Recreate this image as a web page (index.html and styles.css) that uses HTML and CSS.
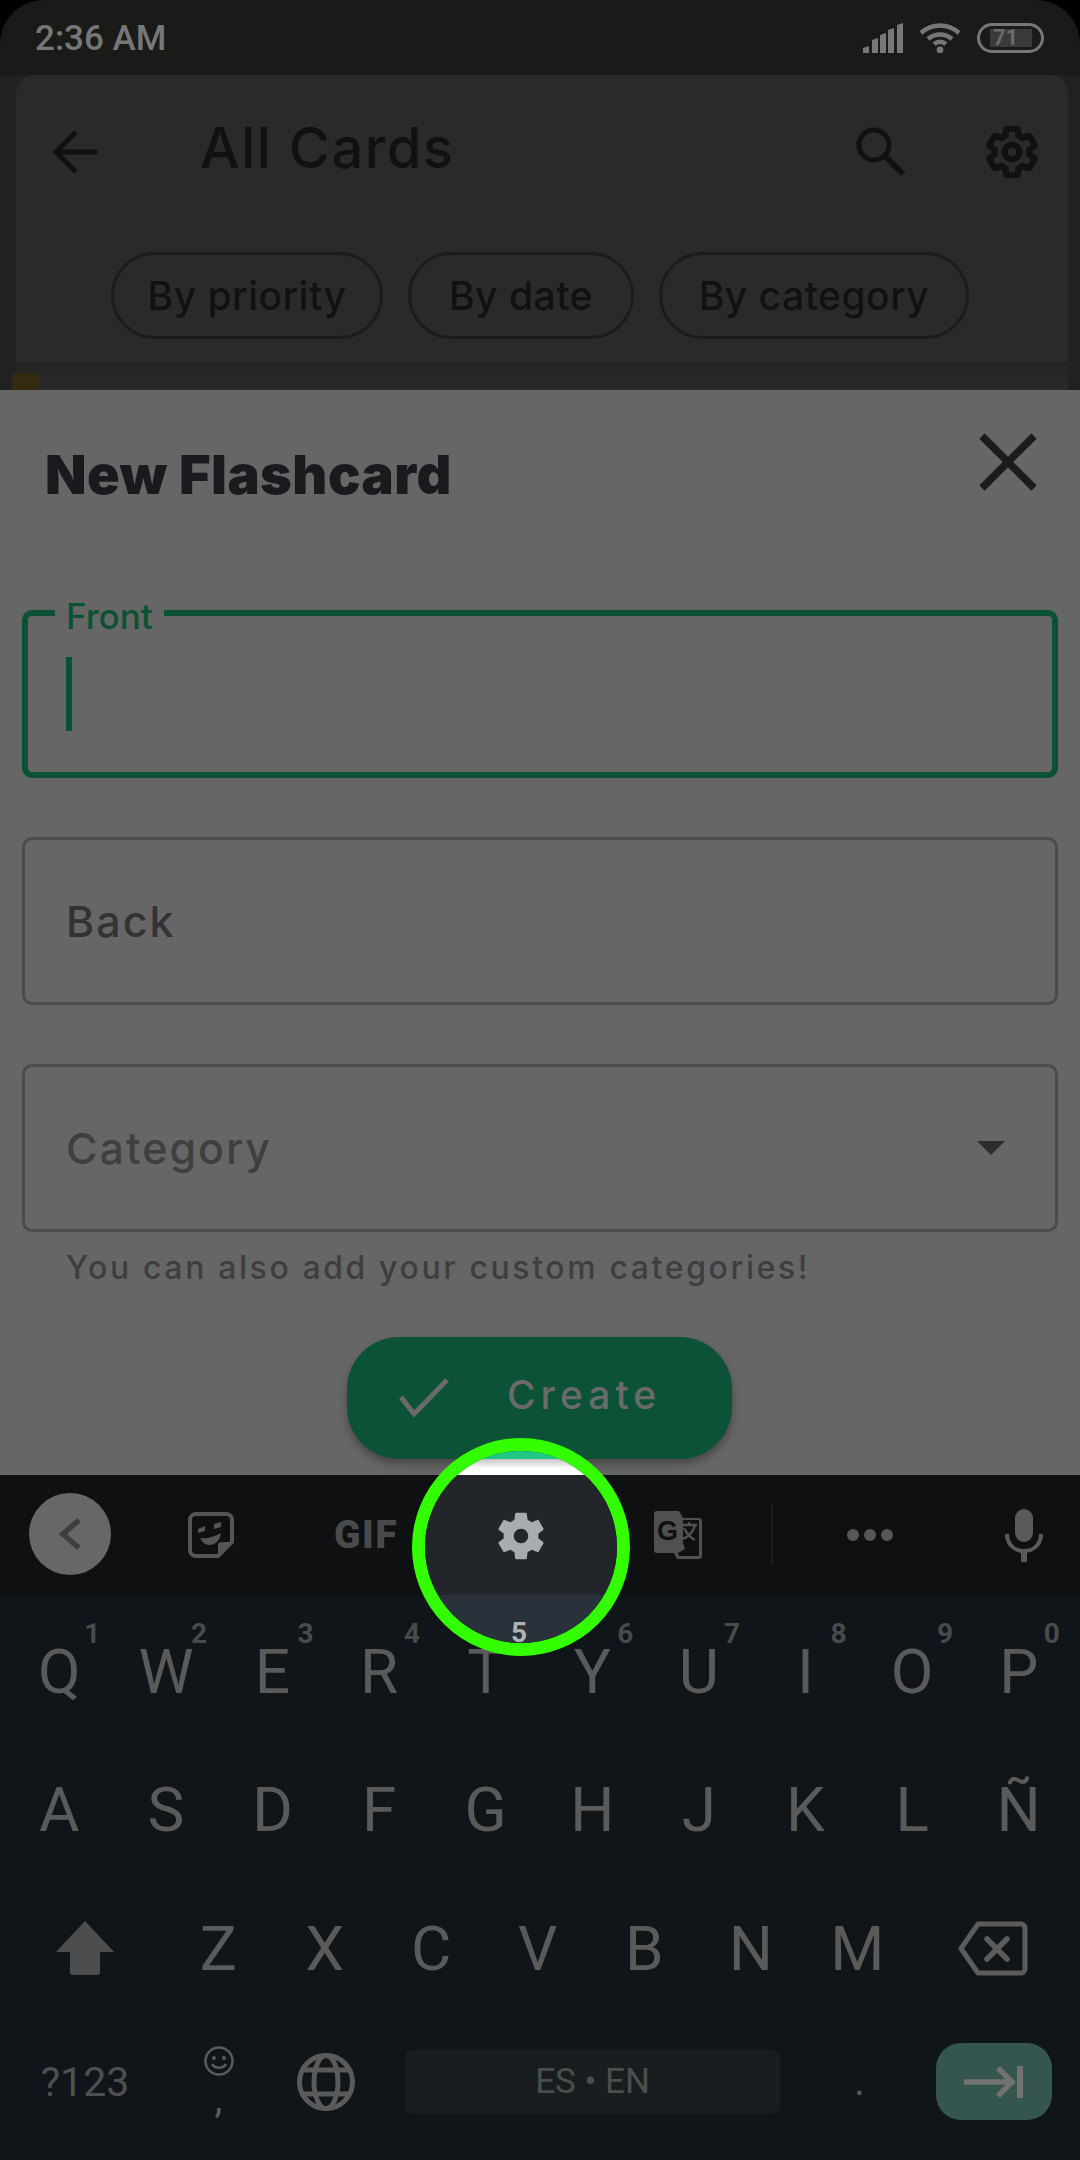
FILE: index.html
```html
<!DOCTYPE html>
<html lang="en">
<head>
    <meta charset="UTF-8">
    <meta name="viewport" content="width=device-width, initial-scale=1.0">
    <title>New Flashcard</title>
    <link rel="stylesheet" href="styles.css">
</head>
<body>
<div class="screen">
    <div class="status-bar">
        <span class="time">2:36 AM</span>
        <div class="status-icons">
            <svg class="signal" width="40" height="30" viewBox="0 0 40 30"><path d="M0 30v-5l6-2v7zM9 30V17l6-2v15zM17 30V12l6-2v20zM25 30V7l6-2v25zM34 30V2l6-2v30z" fill="#777"/></svg>
            <svg class="wifi" width="42" height="30" viewBox="0 0 42 30"><path d="M2 10c11-10 27-10 38 0M9 16c7-6 17-6 24 0M15 21c4-3 8-3 12 0" fill="none" stroke="#777" stroke-width="4.5"/><circle cx="21" cy="27" r="3.4" fill="#777"/></svg>
            <div class="battery"><span class="battery-level">71</span></div>
        </div>
    </div>

    <div class="page">
        <div class="page-card">
            <div class="app-bar">
                <svg width="44" height="44" viewBox="0 0 44 44"><path d="M44 22H4M23 2 3 22l20 20" fill="none" stroke="#111" stroke-width="5"/></svg>
                <h1 class="app-title">All Cards</h1>
                <svg class="search-icon" width="50" height="50" viewBox="0 0 50 50"><circle cx="18" cy="18" r="15" fill="none" stroke="#111" stroke-width="5"/><path d="M29 29l18 18" stroke="#111" stroke-width="6"/></svg>
                <svg class="cog-icon" width="58" height="58" viewBox="0 0 24 24"><path d="M19.14 12.94c.04-.3.06-.61.06-.94 0-.32-.02-.64-.07-.94l2.03-1.58c.18-.14.23-.41.12-.61l-1.92-3.32c-.12-.22-.37-.29-.59-.22l-2.39.96c-.5-.38-1.03-.7-1.62-.94l-.36-2.54c-.04-.24-.24-.41-.48-.41h-3.84c-.24 0-.43.17-.47.41l-.36 2.54c-.59.24-1.13.57-1.62.94l-2.39-.96c-.22-.08-.47 0-.59.22L2.74 8.87c-.12.21-.08.47.12.61l2.03 1.58c-.05.3-.09.63-.09.94s.02.64.07.94l-2.03 1.58c-.18.14-.23.41-.12.61l1.92 3.32c.12.22.37.29.59.22l2.39-.96c.5.38 1.03.7 1.62.94l.36 2.54c.05.24.24.41.48.41h3.84c.24 0 .44-.17.47-.41l.36-2.54c.59-.24 1.13-.56 1.62-.94l2.39.96c.22.08.47 0 .59-.22l1.92-3.32c.12-.22.07-.47-.12-.61l-2.01-1.58z" fill="none" stroke="#111" stroke-width="2.6"/><circle cx="12" cy="12" r="3" fill="none" stroke="#111" stroke-width="2.6"/></svg>
            </div>
            <div class="chips">
                <span class="chip">By priority</span>
                <span class="chip">By date</span>
                <span class="chip">By category</span>
            </div>
            <div class="peek"><span class="peek-mark"></span></div>
        </div>
    </div>

    <div class="sheet">
        <div class="sheet-head">
            <h2 class="sheet-title">New Flashcard</h2>
            <svg width="58" height="58" viewBox="0 0 58 58"><path d="M3 3l52 52M55 3 3 55" stroke="#1c1c20" stroke-width="7.5"/></svg>
        </div>
        <div class="fields">
            <div class="field field-active">
                <span class="field-label">Front</span>
                <span class="cursor"></span>
            </div>
            <div class="field"><span class="field-text">Back</span></div>
            <div class="field field-select">
                <span class="field-text field-muted">Category</span>
                <span class="select-arrow"></span>
            </div>
        </div>
        <p class="help">You can also add your custom categories!</p>
        <div class="button-row">
            <div class="create-button">
                <svg width="50" height="40" viewBox="0 0 50 40"><path d="M2 19l13 17L48 2" fill="none" stroke="#6a6a6a" stroke-width="5"/></svg>
                <span class="create-label">Create</span>
            </div>
        </div>
    </div>

    <div class="keyboard">
        <div class="toolbar">
            <div class="tool"><span class="back-circle"><svg width="26" height="34" viewBox="0 0 26 34"><path d="M22 3 6 17l16 14" fill="none" stroke="#3f3f3f" stroke-width="5.5"/></svg></span></div>
            <div class="tool">
                <svg width="46" height="46" viewBox="0 0 46 46"><path d="M8 2h30a6 6 0 0 1 6 6v22L30 44H8a6 6 0 0 1-6-6V8a6 6 0 0 1 6-6z" fill="none" stroke="#555" stroke-width="4"/><path d="M44 30 30 44V34a4 4 0 0 1 4-4z" fill="#555"/><path d="M10 17l7-3v5l-7 2zM26 12l7-2v5l-7 2z" fill="#555"/><path d="M12 26c7 1 14-1 21-5-1 8-6 12-12 12-4 0-7-3-9-7z" fill="#555"/></svg>
            </div>
            <div class="tool"><span class="gif">GIF</span></div>
            <div class="tool"></div>
            <div class="tool">
                <svg width="48" height="48" viewBox="0 0 48 48"><path d="M3 0h22l4 7h16a3 3 0 0 1 3 3v35a3 3 0 0 1-3 3H23l-3-6H3a3 3 0 0 1-3-3V3a3 3 0 0 1 3-3z" fill="#505050"/><path d="M29 9h16v36H25l-1-3 7-4-2-6z" fill="#0e1012"/><text x="3" y="29" class="translate-g">G</text><path d="M27 14h16M35 11v3M41 14c-2 8-8 13-13 14M30 17c3 6 7 10 11 12" fill="none" stroke="#505050" stroke-width="2.5"/></svg>
            </div>
            <div class="tool"><span class="divider"></span></div>
            <div class="tool dots"><i></i><i></i><i></i></div>
            <div class="tool tool-end">
                <svg width="38" height="53" viewBox="0 0 38 53"><rect x="10" y="0" width="18" height="33" rx="9" fill="#5a5a5a"/><path d="M2 25c0 11 8 17 17 17s17-6 17-17" fill="none" stroke="#5a5a5a" stroke-width="4"/><path d="M19 42v11" stroke="#5a5a5a" stroke-width="6"/></svg>
            </div>
        </div>

        <div class="keys">
            <div class="key-row">
                <span class="key">Q<sup>1</sup></span><span class="key">W<sup>2</sup></span><span class="key">E<sup>3</sup></span><span class="key">R<sup>4</sup></span><span class="key">T</span><span class="key">Y<sup>6</sup></span><span class="key">U<sup>7</sup></span><span class="key">I<sup>8</sup></span><span class="key">O<sup>9</sup></span><span class="key">P<sup>0</sup></span>
            </div>
            <div class="key-row">
                <span class="key">A</span><span class="key">S</span><span class="key">D</span><span class="key">F</span><span class="key">G</span><span class="key">H</span><span class="key">J</span><span class="key">K</span><span class="key">L</span><span class="key">Ñ</span>
            </div>
            <div class="key-row key-row-wide">
                <span class="key">
                    <svg width="58" height="54" viewBox="0 0 58 54"><path d="M29 0l29 31H44v20a3 3 0 0 1-3 3H17a3 3 0 0 1-3-3V31H0z" fill="#4d4d4d"/></svg>
                </span>
                <span class="key">Z</span><span class="key">X</span><span class="key">C</span><span class="key">V</span><span class="key">B</span><span class="key">N</span><span class="key">M</span>
                <span class="key">
                    <svg width="70" height="55" viewBox="0 0 70 55"><path d="M20 3h43a4 4 0 0 1 4 4v41a4 4 0 0 1-4 4H20L3 27.500z" fill="none" stroke="#5c5c5c" stroke-width="5" stroke-linejoin="round"/><path d="M29 18l20 20M49 18 29 38" stroke="#5c5c5c" stroke-width="5.500" stroke-linecap="round"/></svg>
                </span>
            </div>
            <div class="key-row key-row-wide key-row-bottom">
                <span class="key key-small">?123</span>
                <span class="key key-comma">
                    <svg width="30" height="30" viewBox="0 0 30 30"><circle cx="15" cy="15" r="13.500" fill="none" stroke="#5a5a5a" stroke-width="2.500"/><circle cx="10" cy="12" r="2" fill="#5a5a5a"/><circle cx="20" cy="12" r="2" fill="#5a5a5a"/><path d="M8 18c3 5 11 5 14 0" fill="none" stroke="#5a5a5a" stroke-width="2.500"/></svg>
                    <span class="comma">,</span>
                </span>
                <span class="key">
                    <svg width="58" height="60" viewBox="0 0 58 60"><circle cx="29" cy="30" r="26.500" fill="none" stroke="#5a5a5a" stroke-width="5"/><ellipse cx="29" cy="30" rx="12" ry="26.500" fill="none" stroke="#5a5a5a" stroke-width="5"/><path d="M5 18h48M5 42h48" stroke="#5a5a5a" stroke-width="5"/></svg>
                </span>
                <span class="key key-space"><span class="space-bar">ES • EN</span></span>
                <span class="key key-period">.</span>
                <span class="key">
                    <span class="enter">
                        <svg width="60" height="34" viewBox="0 0 60 34"><path d="M0 17h50M34 3l14 14-14 14" fill="none" stroke="#727272" stroke-width="5.500"/><path d="M56 1v32" stroke="#727272" stroke-width="6"/></svg>
                    </span>
                </span>
            </div>
        </div>
    </div>

    <!-- tap highlight, sits over the sheet and keyboard -->
    <div class="tap-ring">
        <div class="ring-button"></div>
        <div class="ring-sheet"></div>
        <div class="ring-toolbar">
            <svg width="58" height="58" viewBox="0 0 24 24"><path d="M19.14 12.94c.04-.3.06-.61.06-.94 0-.32-.02-.64-.07-.94l2.03-1.58c.18-.14.23-.41.12-.61l-1.92-3.32c-.12-.22-.37-.29-.59-.22l-2.39.96c-.5-.38-1.03-.7-1.62-.94l-.36-2.54c-.04-.24-.24-.41-.48-.41h-3.84c-.24 0-.43.17-.47.41l-.36 2.54c-.59.24-1.13.57-1.62.94l-2.39-.96c-.22-.08-.47 0-.59.22L2.74 8.87c-.12.21-.08.47.12.61l2.03 1.58c-.05.3-.09.63-.09.94s.02.64.07.94l-2.03 1.58c-.18.14-.23.41-.12.61l1.92 3.32c.12.22.37.29.59.22l2.39-.96c.5.38 1.03.7 1.62.94l.36 2.54c.05.24.24.41.48.41h3.84c.24 0 .44-.17.47-.41l.36-2.54c.59-.24 1.13-.56 1.62-.94l2.39.96c.22.08.47 0 .59-.22l1.92-3.32c.12-.22.07-.47-.12-.61l-2.01-1.58zM12 15c-1.650 0-3-1.350-3-3s1.350-3 3-3 3 1.350 3 3-1.350 3-3 3z" fill="#a9acae"/></svg>
        </div>
        <div class="ring-keys"><span class="ring-digit">5</span></div>
    </div>
</div>
</body>
</html>
```

FILE: styles.css
```css
* {
    box-sizing: border-box;
}
html, body {
    margin: 0;
    padding: 0;
    background: #000;
}
.screen {
    position: relative;
    width: 1080px;
    height: 2160px;
    overflow: hidden;
    display: flex;
    flex-direction: column;
    font-family: Inter, "Liberation Sans", sans-serif;
    background: #000;
}
svg {
    display: block;
    flex-shrink: 0;
}

/* status bar */
.status-bar {
    height: 75px;
    flex-shrink: 0;
    display: flex;
    align-items: center;
    justify-content: space-between;
    padding: 0 36px 0 35px;
    background: #1a1a18;
    border-radius: 44px 44px 0 0;
}
.time {
    padding-top: 2px;
    font-family: Roboto, sans-serif;
    font-weight: 500;
    font-size: 35px;
    color: #777;
}
.status-icons {
    display: flex;
    align-items: center;
    gap: 16px;
}
.battery {
    width: 67px;
    height: 30px;
    padding: 3px 10px;
    border: 3px solid #777;
    border-radius: 15px;
}
.battery-level {
    display: block;
    width: 42px;
    height: 100%;
    padding-left: 3px;
    background: #3a3a3a;
    color: #6a6a6a;
    font-family: Roboto, sans-serif;
    font-weight: 700;
    font-size: 22px;
    line-height: 18px;
}

/* list page behind the sheet */
.page {
    height: 315px;
    flex-shrink: 0;
    padding: 0 12px 0 16px;
    background: #212121;
}
.page-card {
    height: 315px;
    display: flex;
    flex-direction: column;
    background: #2a2a2a;
    border-radius: 18px 18px 0 0;
}
.app-bar {
    height: 154px;
    flex-shrink: 0;
    display: flex;
    align-items: center;
    padding-left: 37px;
}
.app-title {
    margin: -9px 0 0 103px;
    flex: 1;
    font-weight: 500;
    font-size: 56px;
    letter-spacing: 1.500px;
    color: #111;
}
.search-icon {
    margin-right: 77px;
}
.cog-icon {
    margin-right: 27px;
}
.chips {
    display: grid;
    grid-template-columns: 272px 226px 310px;
    gap: 25px;
    margin-top: 23px;
    padding-left: 95px;
}
.chip {
    height: 87px;
    display: flex;
    align-items: center;
    justify-content: center;
    border: 3px solid #1c1c1c;
    border-radius: 44px;
    font-weight: 500;
    font-size: 39px;
    letter-spacing: 0.500px;
    color: #111;
    white-space: nowrap;
}
.peek {
    height: 28px;
    margin-top: 23px;
    padding-top: 11px;
    background: linear-gradient(#232323, #2a2a2a);
}
.peek-mark {
    display: block;
    width: 27px;
    height: 17px;
    margin-left: -4px;
    background: #332a10;
    border-radius: 4px 4px 0 0;
}

/* new flashcard sheet */
.sheet {
    height: 1085px;
    flex-shrink: 0;
    background: #666;
}
.sheet-head {
    height: 220px;
    display: flex;
    justify-content: space-between;
    padding: 43px 43px 0 45px;
}
.sheet-title {
    margin: 12px 0 0;
    font-weight: 900;
    font-size: 54px;
    letter-spacing: 0.500px;
    line-height: 60px;
    color: #1a1a1e;
}
.fields {
    display: flex;
    flex-direction: column;
    gap: 59px;
    padding: 0 22px;
}
.field {
    position: relative;
    height: 168px;
    display: flex;
    align-items: center;
    padding: 0 41px;
    border: 3px solid #4b4b4b;
    border-radius: 10px;
}
.field-active {
    border: 6px solid #0b5234;
    padding: 0 38px;
}
.field-label {
    position: absolute;
    top: -20px;
    left: 27px;
    padding: 0 11px;
    background: #666;
    font-weight: 500;
    font-size: 35px;
    line-height: 40px;
    color: #0b5234;
}
.cursor {
    width: 6px;
    height: 74px;
    background: #0b5234;
}
.field-text {
    font-weight: 500;
    font-size: 43px;
    letter-spacing: 2px;
    color: #333;
}
.field-muted {
    color: #3f3f3f;
}
.field-select {
    justify-content: space-between;
    padding-right: 50px;
}
.select-arrow {
    width: 0;
    height: 0;
    border-left: 14px solid transparent;
    border-right: 14px solid transparent;
    border-top: 14px solid #2e2e2e;
}
.help {
    margin: 16px 0 0 66px;
    font-weight: 500;
    font-size: 32px;
    line-height: 40px;
    letter-spacing: 2.600px;
    color: #3e3e3e;
}
.button-row {
    display: flex;
    padding-left: 347px;
    margin-top: 49px;
}
.create-button {
    width: 385px;
    height: 122px;
    display: flex;
    align-items: center;
    gap: 58px;
    padding-left: 52px;
    background: #0c5236;
    border-radius: 52px;
    box-shadow: 0 5px 8px rgba(0, 0, 0, 0.3);
    font-weight: 500;
    font-size: 39px;
    letter-spacing: 5px;
    color: #6a6a6a;
}
.create-label {
    padding-bottom: 8px;
}

/* keyboard */
.keyboard {
    flex: 1;
    display: flex;
    flex-direction: column;
    background: #0f1518;
}
.toolbar {
    height: 120px;
    flex-shrink: 0;
    display: grid;
    grid-template-columns: 133px 156px 154px 157px 156px 32px 164px 128px;
    background: #0e1012;
}
.tool {
    display: flex;
    align-items: center;
    justify-content: center;
}
.tool-end {
    justify-content: flex-end;
    padding-right: 37px;
}
.back-circle {
    width: 82px;
    height: 82px;
    margin: -2px 0 0 7px;
    display: flex;
    align-items: center;
    justify-content: center;
    border-radius: 50%;
    background: #676767;
}
.gif {
    font-family: Roboto, sans-serif;
    font-weight: 900;
    font-size: 39px;
    letter-spacing: 1.500px;
    color: #4a4a4a;
}
.translate-g {
    font-family: "Liberation Sans", sans-serif;
    font-weight: 700;
    font-size: 27px;
    fill: #0e1012;
}
.divider {
    width: 2px;
    height: 60px;
    background: #1b1d1f;
}
.dots {
    gap: 5px;
}
.dots i {
    width: 12px;
    height: 12px;
    border-radius: 50%;
    background: #575757;
}
.keys {
    padding: 7px 5px 0;
    font-family: Roboto, sans-serif;
    font-size: 62px;
    color: #5a5a5a;
}
.key-row {
    height: 138.500px;
    margin: 0 3px 0 1px;
    display: grid;
    grid-template-columns: repeat(10, 1fr);
}
.key-row-wide {
    margin: 0;
    grid-template-columns: 160px repeat(7, 106.500px) 164.500px;
}
.key-row-wide.key-row-bottom {
    margin-top: -5px;
    grid-template-columns: 160px 107px 107px 427px 107px 162px;
}
.key {
    position: relative;
    display: flex;
    align-items: center;
    justify-content: center;
}
.key sup {
    position: absolute;
    top: 22px;
    left: 50%;
    margin-left: 25px;
    font-size: 28px;
    font-weight: 700;
    line-height: 20px;
    color: #4a4a4a;
}
.key-small {
    font-size: 41px;
    color: #4f4f4f;
}
.key-comma {
    flex-direction: column;
    gap: 12px;
    padding-bottom: 8px;
}
.comma {
    font-size: 40px;
    line-height: 22px;
}
.key-space {
    padding: 0 26px;
}
.space-bar {
    width: 100%;
    height: 64px;
    display: flex;
    align-items: center;
    justify-content: center;
    background: #181d20;
    border-radius: 8px;
    font-size: 35px;
    color: #4d4d4d;
}
.key-period {
    font-size: 40px;
}
.enter {
    width: 116px;
    height: 77px;
    display: flex;
    align-items: center;
    justify-content: center;
    background: #34564f;
    border-radius: 25px;
}

/* tap highlight ring */
.tap-ring {
    position: absolute;
    left: 412px;
    top: 1438px;
    width: 218px;
    height: 218px;
    display: flex;
    flex-direction: column;
    border: 13px solid #33ff00;
    border-radius: 50%;
    overflow: hidden;
    font-family: Roboto, sans-serif;
}
.ring-button {
    height: 8px;
    flex-shrink: 0;
    background: #1fc985;
}
.ring-sheet {
    height: 16px;
    flex-shrink: 0;
    background: linear-gradient(#c4c4c4, #fff 60%);
}
.ring-toolbar {
    height: 120px;
    flex-shrink: 0;
    display: flex;
    align-items: center;
    justify-content: center;
    padding-top: 2px;
    background: #22262a;
}
.ring-keys {
    flex: 1;
    display: flex;
    justify-content: center;
    background: #29323a;
}
.ring-digit {
    margin-top: 22px;
    margin-right: 4px;
    font-size: 28px;
    font-weight: 700;
    line-height: 32px;
    color: #b0b3b5;
}
```
